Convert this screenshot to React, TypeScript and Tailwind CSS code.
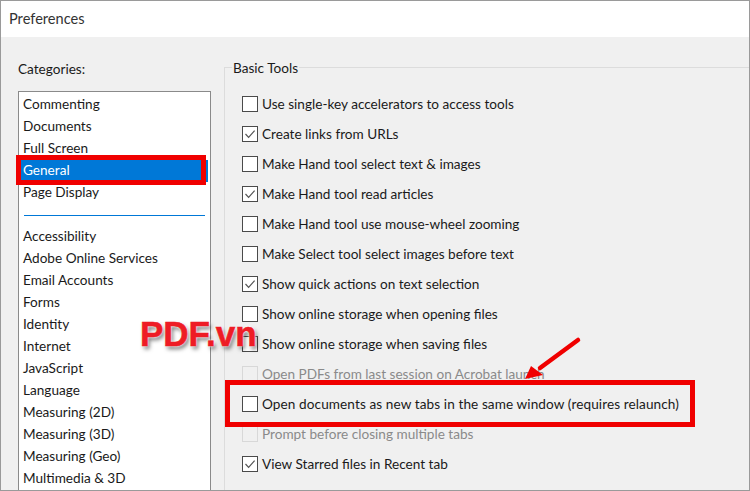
const topCats = ["Commenting", "Documents", "Full Screen", "General", "Page Display"];
const bottomCats = ["Accessibility", "Adobe Online Services", "Email Accounts", "Forms", "Identity", "Internet", "JavaScript", "Language", "Measuring (2D)", "Measuring (3D)", "Measuring (Geo)", "Multimedia & 3D"];
const options: { label: string; checked?: boolean; disabled?: boolean; wide?: boolean }[] = [
  { label: "Use single-key accelerators to access tools" },
  { label: "Create links from URLs", checked: true },
  { label: "Make Hand tool select text & images" },
  { label: "Make Hand tool read articles", checked: true },
  { label: "Make Hand tool use mouse-wheel zooming" },
  { label: "Make Select tool select images before text" },
  { label: "Show quick actions on text selection", checked: true },
  { label: "Show online storage when opening files" },
  { label: "Show online storage when saving files" },
  { label: "Open PDFs from last session on Acrobat launch", disabled: true },
  { label: "Open documents as new tabs in the same window (requires relaunch)", wide: true },
  { label: "Prompt before closing multiple tabs", disabled: true },
  { label: "View Starred files in Recent tab", checked: true },
];

function Row({ label, checked, disabled, wide }: { label: string; checked?: boolean; disabled?: boolean; wide?: boolean }) {
  return (
    <div className="flex h-[30px] items-center">
      <div className={`flex h-[16px] w-[16px] shrink-0 items-center justify-center border ${disabled ? "border-[#d8d8d8] bg-[#f0f0f0]" : "border-[#4a4a4a] bg-white"}`}>
        {checked && (
          <svg width="12" height="12" viewBox="0 0 12 12" fill="none">
            <path d="M1.5 6 L4.6 9.3 L10.6 2.6" stroke="#555" strokeWidth="1.2" />
          </svg>
        )}
      </div>
      <span className={`ml-[4px] whitespace-nowrap ${disabled ? "text-[#8a8a8a]" : "text-[#1a1a1a]"} ${wide ? "tracking-[0.09px]" : ""}`}>{label}</span>
    </div>
  );
}

export default function App() {
  return (
    <div className="relative flex h-[491px] w-[750px] flex-col overflow-hidden border border-[#9a9a9a] bg-[#f0f0f0] text-[13.6px] font-['Lato','Noto_Sans',sans-serif] text-[#1a1a1a]">
      <div className="flex h-[36px] shrink-0 items-center bg-white pb-[1px] pl-[8px] text-[14.6px] text-[#333]">Preferences</div>
      <div className="flex min-h-0 flex-1 pl-[17px]">
        <div className="flex w-[193px] shrink-0 flex-col">
          <div className="flex h-[54px] items-start pt-[22px]">Categories:</div>
          <div className="flex-1 overflow-hidden border border-b-0 border-[#8a8a8a] bg-white px-[2px] pt-[2px]">
            {topCats.map((c) => (
              <div key={c} className={`flex h-[22px] items-center pb-[1px] pl-[2px] ${c === "General" ? "bg-[#0078d7] text-white" : ""}`}>{c}</div>
            ))}
            <div className="flex h-[22px] items-center px-[3px]">
              <div className="h-px w-full bg-[#0078d7]" />
            </div>
            {bottomCats.map((c) => (
              <div key={c} className="flex h-[22px] items-center pb-[1px] pl-[2px]">{c}</div>
            ))}
          </div>
        </div>
        <div className="relative ml-[13px] mt-[30px] flex-1 border-l border-t border-[#dcdcdc] pl-[17px] pt-[21px]">
          <div className="absolute left-[7px] top-[-10px] bg-[#f0f0f0] px-[1px] leading-[20px]">Basic Tools</div>
          {options.map((o) => (
            <Row key={o.label} {...o} />
          ))}
        </div>
      </div>

      <div className="absolute left-[15px] top-[154px] h-[30px] w-[190px] border-[5px] border-[#f00000]" />
      <div className="absolute left-[224px] top-[379px] h-[47px] w-[470px] border-[5px] border-[#f00000]" />
      <svg className="absolute left-[515px] top-[330px]" width="70" height="50" viewBox="0 0 70 50" fill="none">
        <path d="M62 9 L24 37" stroke="#f00000" strokeWidth="4.5" strokeLinecap="round" />
        <path d="M9 48 L15 35 L27 44 Z" fill="#f00000" />
      </svg>
      <div
        className="absolute left-[139px] top-[313px] font-['Liberation_Sans',sans-serif] text-[35px] font-bold leading-[40px] text-[#ee1c25] [-webkit-text-stroke:0.6px_#ee1c25]"
        style={{ textShadow: "0 0 2px #fff, 0 0 3px #fff, 2px 3px 4px rgba(0,0,0,0.55)" }}
      >
        PDF.vn
      </div>
    </div>
  );
}
